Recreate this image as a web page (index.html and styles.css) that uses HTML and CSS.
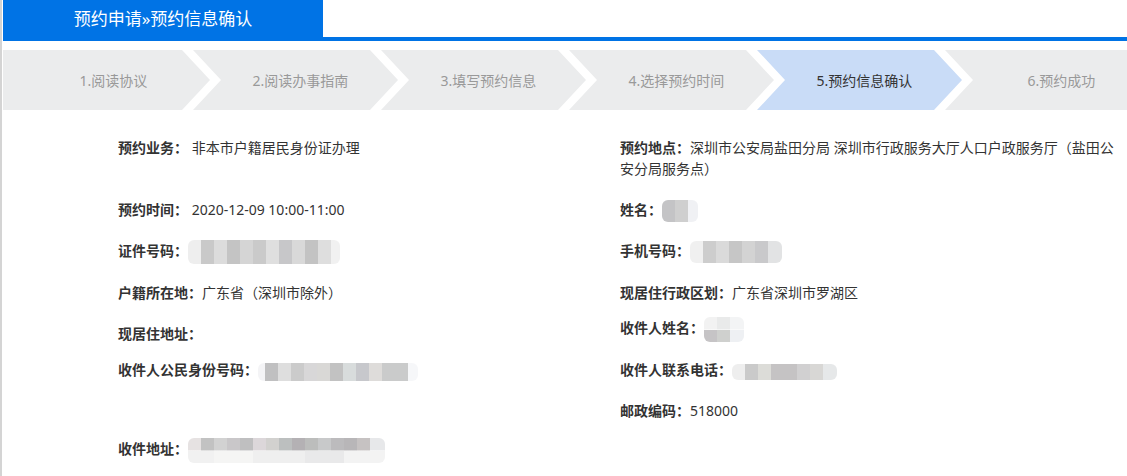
FILE: index.html
```html
<!DOCTYPE html>
<html lang="zh-CN">
<head>
  <meta charset="UTF-8">
  <meta name="viewport" content="width=device-width, initial-scale=1.0">
  <title>预约信息确认</title>
  <link rel="stylesheet" href="styles.css">
</head>
<body>
  <div class="page">
    <div class="header">
      <div class="header-tab">预约申请»预约信息确认</div>
    </div>

    <div class="steps">
      <div class="step">1.阅读协议</div>
      <div class="step">2.阅读办事指南</div>
      <div class="step">3.填写预约信息</div>
      <div class="step">4.选择预约时间</div>
      <div class="step active">5.预约信息确认</div>
      <div class="step">6.预约成功</div>
    </div>

    <div class="info">
      <div class="item"><span class="label">预约业务：</span> 非本市户籍居民身份证办理</div>
      <div class="item"><span class="label">预约地点：</span>深圳市公安局盐田分局 深圳市行政服务大厅人口户政服务厅（盐田公安分局服务点）</div>

      <div class="item"><span class="label">预约时间：</span> 2020-12-09 10:00-11:00</div>
      <div class="item"><span class="label">姓名：</span><span class="mosaic m-name"></span></div>

      <div class="item"><span class="label">证件号码：</span><span class="mosaic m-id"></span></div>
      <div class="item"><span class="label">手机号码：</span><span class="mosaic m-phone"></span></div>

      <div class="item"><span class="label">户籍所在地：</span>广东省（深圳市除外）</div>
      <div class="item"><span class="label">现居住行政区划：</span>广东省深圳市罗湖区</div>

      <div class="item"><span class="label">现居住地址：</span></div>
      <div class="item raise"><span class="label">收件人姓名：</span><span class="mosaic m-rname"></span></div>

      <div class="item raise-sm"><span class="label">收件人公民身份号码：</span><span class="mosaic m-rid"></span></div>
      <div class="item raise-sm"><span class="label">收件人联系电话：</span><span class="mosaic m-rphone"></span></div>

      <div class="item"></div>
      <div class="item"><span class="label">邮政编码：</span>518000</div>

      <div class="item raise-xs"><span class="label">收件地址：</span><span class="mosaic m-addr"></span></div>
      <div class="item"></div>
    </div>
  </div>
</body>
</html>
```

FILE: styles.css
```css
body {
  margin: 0;
  font-family: "Noto Sans", "Noto Sans CJK SC", sans-serif;
  color: #333;
  overflow: hidden;
}

.page {
  border-left: 2px solid #d4d4d4;
  padding-left: 1px;
  height: 476px;
}

.header {
  height: 37px;
  border-bottom: 4px solid #0073e5;
}

.header-tab {
  width: 320px;
  height: 37px;
  line-height: 37px;
  background: #0073e5;
  color: #fff;
  font-size: 17px;
  text-align: center;
}

/* step bar */
.steps {
  display: flex;
  height: 60px;
  margin-top: 9px;
  overflow: hidden;
}

.step {
  flex: none;
  box-sizing: border-box;
  width: 205px;
  margin-left: -17px;
  padding-left: 10px;
  display: flex;
  align-items: center;
  justify-content: center;
  background: #ebeced;
  color: #999;
  font-size: 14px;
  clip-path: polygon(0 0, calc(100% - 28px) 0, 100% 50%, calc(100% - 28px) 100%, 0 100%, 28px 50%);
}

.step:first-child {
  width: 207px;
  margin-left: 0;
  padding-left: 14px;
  clip-path: polygon(0 0, calc(100% - 28px) 0, 100% 50%, calc(100% - 28px) 100%, 0 100%);
}

.step:last-child {
  width: 223px;
  clip-path: polygon(0 0, 100% 0, 100% 100%, 0 100%, 28px 50%);
}

.step.active {
  background: #c9dcf7;
  color: #333;
}

/* info grid */
.info {
  display: grid;
  grid-template-columns: 502px 1fr;
  row-gap: 20px;
  margin-left: 115px;
  padding-top: 27px;
  font-size: 14px;
  line-height: 21px;
}

.label {
  font-weight: bold;
}

.raise {
  margin-top: -6px;
}

.raise-sm {
  margin-top: -5px;
}

.raise-xs {
  margin-top: -3px;
}

/* blurred values */
.mosaic {
  display: inline-block;
  vertical-align: middle;
  margin: -4px 0;
  border-radius: 6px;
  filter: blur(0.6px);
}

.m-name {
  width: 36px;
  height: 22px;
  background: linear-gradient(90deg, #c4c4c6 0 13px, #cfcfcf 13px 26px, #f0f1f4 26px);
}

.m-id {
  width: 152px;
  height: 24px;
  margin: -2px 0;
  background: linear-gradient(90deg, #eeeeee 0 13px, #c9c9c9 13px 26px, #dcdcdc 26px 39px,
    #c4c4c4 39px 52px, #d5d5d5 52px 65px, #cacaca 65px 78px, #dfdfdf 78px 91px,
    #c7c7c9 91px 104px, #d9d9d9 104px 117px, #c3c3c3 117px 130px, #dedede 130px 143px, #f1f1f1 143px);
}

.m-phone {
  width: 92px;
  height: 22px;
  background: linear-gradient(90deg, #f0f0f0 0 13px, #cdcdcd 13px 26px, #dadada 26px 39px,
    #c6c6c6 39px 52px, #d3d3d3 52px 65px, #c9c9cb 65px 78px, #e2e3e4 78px);
}

.m-rname {
  width: 40px;
  height: 25px;
  background:
    linear-gradient(90deg, #f2f2f2 0 13px, #e9eaea 13px 26px, #f3f4f5 26px) top / 100% 50% no-repeat,
    linear-gradient(90deg, #c6c4c6 0 13px, #cfd0ce 13px 26px, #eef0f3 26px) bottom / 100% 50% no-repeat;
}

.m-rid {
  width: 160px;
  height: 18px;
  background: linear-gradient(90deg, #f4f4f6 0 7px, #c0c0c1 7px 20px, #dedede 20px 33px,
    #cbcbcb 33px 46px, #d8d7d8 46px 59px, #d9d8d6 59px 72px, #c2c2c2 72px 85px,
    #d8dcdc 85px 98px, #c7c8cc 98px 111px, #dedcda 111px 124px, #cacbcb 124px 150px, #f6f7f9 150px);
}

.m-rphone {
  width: 105px;
  height: 16px;
  background: linear-gradient(90deg, #eeeeee 0 13px, #cacaca 13px 26px, #dcdcd8 26px 39px,
    #c5c3c4 39px 65px, #d1d0d1 65px 78px, #d8d7d5 78px 91px, #e6e8e9 91px);
}

.m-addr {
  width: 197px;
  height: 25px;
  background:
    linear-gradient(90deg, #e6e2e2 0 13px, #c2c2c2 13px 26px, #d2d2d2 26px 39px, #c9c7c9 39px 52px,
      #bfbfc0 52px 65px, #dcd7da 65px 78px, #d2d1cf 78px 91px, #bcbfbf 91px 104px, #b4b1b4 104px 117px,
      #bcbdbc 117px 130px, #c8c9ca 130px 143px, #bcbbbd 143px 156px, #b8b6b8 156px 169px,
      #c6c2c2 169px 182px, #e7e8ea 182px) top / 100% 50% no-repeat,
    linear-gradient(90deg, #f1f1f1 0 26px, #f5f5f4 26px 65px, #efefef 65px 117px, #e9e9ea 117px 156px,
      #f3f3f3 156px) bottom / 100% 50% no-repeat;
}
```
